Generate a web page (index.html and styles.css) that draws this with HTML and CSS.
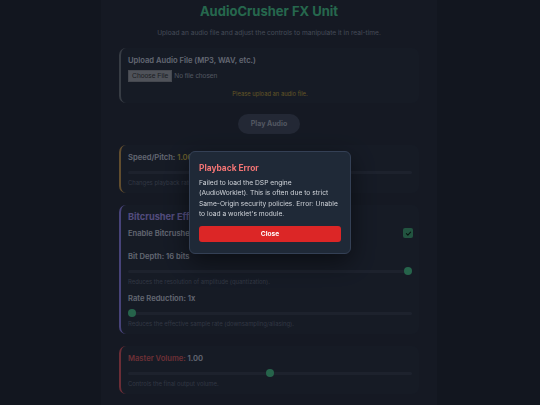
FILE: index.html
```html
<!DOCTYPE html>
<html lang="en">
<head>
<meta charset="utf-8">
<title>AudioCrusher FX Unit</title>
<link rel="stylesheet" href="styles.css">
</head>
<body>
<main class="unit">
  <h1 class="title">AudioCrusher FX Unit</h1>
  <p class="subtitle">Upload an audio file and adjust the controls to manipulate it in real-time.</p>

  <section class="card card-upload">
    <label class="label">Upload Audio File (MP3, WAV, etc.)</label>
    <div class="file-row">
      <span class="file-btn">Choose File</span>
      <span class="file-name">No file chosen</span>
    </div>
    <p class="status">Please upload an audio file.</p>
  </section>

  <div class="play-row">
    <button class="play-btn" type="button">Play Audio</button>
  </div>

  <section class="card card-speed">
    <div class="label">Speed/Pitch: <span class="value-speed">1.00</span></div>
    <input class="slider" type="range" min="0.5" max="2" step="0.01" value="1">
    <p class="desc">Changes playback rate and pitch together.</p>
  </section>

  <section class="card card-crush">
    <h2 class="heading">Bitcrusher Effect</h2>
    <div class="toggle-row">
      <span class="label">Enable Bitcrusher</span>
      <span class="check">
        <svg viewBox="0 0 10 10" width="7" height="7"><path d="M2 5.2 L4.1 7.2 L8 3" fill="none" stroke="#0e2a20" stroke-width="1.6" stroke-linecap="round" stroke-linejoin="round"/></svg>
      </span>
    </div>
    <div class="label label-first">Bit Depth: 16 bits</div>
    <input class="slider" type="range" min="1" max="16" step="1" value="16">
    <p class="desc">Reduces the resolution of amplitude (quantization).</p>
    <div class="label label-next">Rate Reduction: 1x</div>
    <input class="slider" type="range" min="1" max="40" step="1" value="1">
    <p class="desc">Reduces the effective sample rate (downsampling/aliasing).</p>
  </section>

  <section class="card card-volume">
    <div class="label"><span class="label-red">Master Volume:</span> 1.00</div>
    <input class="slider" type="range" min="0" max="2" step="0.01" value="1">
    <p class="desc">Controls the final output volume.</p>
  </section>
</main>

<div class="overlay">
  <div class="modal">
    <h3 class="modal-title">Playback Error</h3>
    <p class="modal-text">Failed to load the DSP engine (AudioWorklet). This is often due to strict Same-Origin security policies. Error: Unable to load a worklet's module.</p>
    <button class="close-btn" type="button">Close</button>
  </div>
</div>
</body>
</html>
```

FILE: styles.css
```css
html, body {
  margin: 0;
  padding: 0;
}
body {
  background: #242c3e;
  font-family: Inter, "Noto Sans", "Liberation Sans", sans-serif;
  height: 405px;
  overflow: hidden;
}
.unit {
  width: 300px;
  margin: 0 auto;
  padding: 0 18px 20px 18px;
  background: #2a3347;
  min-height: 405px;
  box-sizing: content-box;
  transform: translateX(-1px);
}
.title {
  margin: 0;
  padding-top: 3px;
  text-align: center;
  font-size: 13px;
  line-height: 16px;
  font-weight: 700;
  color: #4ccf9b;
}
.subtitle {
  margin: 10px 0 0 0;
  text-align: center;
  font-size: 6.6px;
  line-height: 9px;
  color: #8994ac;
}
.card {
  background: #2c364b;
  border-radius: 7px;
  border-left: 2px solid #6f7888;
  padding: 7px 7px 6px 7px;
}
.card-upload {
  margin-top: 10px;
  padding-bottom: 5px;
}
.card-speed { border-left-color: #c39a5c; margin-top: 11px; }
.card-crush { border-left-color: #8f86f2; margin-top: 12px; padding-top: 6px; }
.card-volume { border-left-color: #d65a6c; margin-top: 12px; }

.label {
  display: block;
  font-size: 7.6px;
  line-height: 11px;
  font-weight: 600;
  color: #c6cee0;
}
.label-first { margin-top: 12px; }
.label-next { margin-top: 7px; }
.label-red { color: #d8606c; }
.value-speed { color: #d0bc58; }

.file-row {
  display: flex;
  align-items: center;
  gap: 2px;
  margin-top: 4px;
}
.file-btn {
  display: inline-block;
  background: #9ea4b2;
  color: #383d48;
  border: 1px solid #8a909e;
  font-family: "Liberation Sans", Arial, sans-serif;
  font-size: 6.8px;
  line-height: 9.6px;
  padding: 0 3px;
}
.file-name {
  font-family: "Liberation Sans", Arial, sans-serif;
  font-size: 6.8px;
  color: #a0aabe;
}
.status {
  margin: 7px 0 0 0;
  text-align: center;
  font-size: 5.8px;
  line-height: 9px;
  color: #c2a94c;
}
.play-row {
  display: flex;
  justify-content: center;
  margin-top: 11px;
}
.play-btn {
  border: 0;
  background: #46506a;
  color: #a4aec2;
  font-family: inherit;
  font-size: 7px;
  font-weight: 700;
  height: 20px;
  padding: 0 13px;
  border-radius: 10px;
}
.slider {
  -webkit-appearance: none;
  appearance: none;
  display: block;
  width: 100%;
  margin: 5px 0 0 0;
  height: 9px;
  background: transparent;
}
.slider::-webkit-slider-runnable-track {
  height: 3px;
  background: #3a445b;
  border-radius: 2px;
}
.slider::-webkit-slider-thumb {
  -webkit-appearance: none;
  appearance: none;
  width: 8px;
  height: 8px;
  margin-top: -2.5px;
  border-radius: 50%;
  background: #4cc896;
  border: 0;
}
.desc {
  margin: 2px 0 0 0;
  font-size: 5.9px;
  line-height: 8px;
  color: #636e86;
}
.heading {
  margin: 0;
  font-size: 9.2px;
  line-height: 11px;
  font-weight: 700;
  color: #a498f6;
}
.toggle-row {
  display: flex;
  justify-content: space-between;
  align-items: center;
  margin-top: 6px;
}
.check {
  width: 10px;
  height: 10px;
  border-radius: 2px;
  background: #44a880;
  display: flex;
  align-items: center;
  justify-content: center;
  margin-right: -1px;
}
.overlay {
  position: fixed;
  inset: 0;
  background: rgba(0, 0, 0, 0.5);
  display: flex;
  align-items: center;
  justify-content: center;
}
.modal {
  width: 142px;
  background: #1f2937;
  border: 1px solid #344055;
  border-radius: 6px;
  padding: 10px 9px 11px 9px;
  box-shadow: 0 8px 24px rgba(0, 0, 0, 0.5);
}
.modal-title {
  margin: 0;
  font-size: 8.4px;
  line-height: 12px;
  font-weight: 700;
  color: #f27474;
}
.modal-text {
  margin: 4.4px 0 0 0;
  font-size: 6.7px;
  line-height: 10.2px;
  color: #d1d5db;
}
.close-btn {
  display: block;
  width: 100%;
  margin-top: 7px;
  height: 16px;
  border: 0;
  border-radius: 3px;
  background: #dc2626;
  color: #ffffff;
  font-family: inherit;
  font-size: 6.6px;
  font-weight: 700;
}
```
